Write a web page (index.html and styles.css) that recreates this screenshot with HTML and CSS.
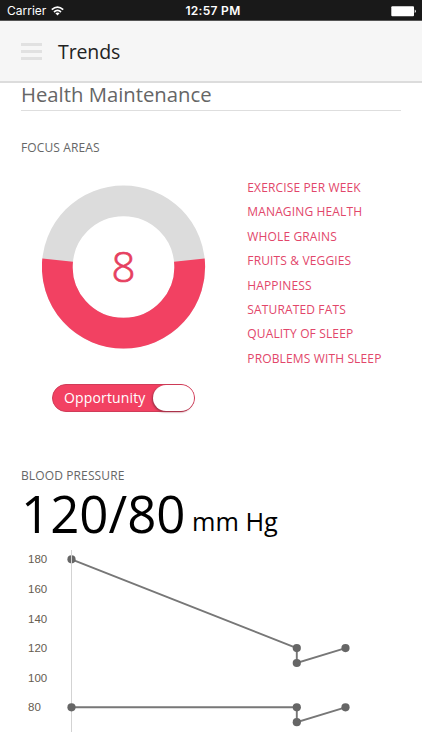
FILE: index.html
```html
<!DOCTYPE html>
<html lang="en">
<head>
<meta charset="utf-8">
<title>Trends</title>
<link rel="stylesheet" href="styles.css">
</head>
<body>
<div class="status">
  <div class="carrier">Carrier
    <svg class="wifi" width="13" height="10" viewBox="0 0 13 10" fill="none" stroke="#fff" stroke-width="1.7"><path d="M.8 3.7Q6.500-1.500 12.200 3.700M3 6Q6.500 2.900 10 6"/><path d="M4.400 7.300Q6.500 5.600 8.600 7.300L6.500 9.500Z" fill="#fff" stroke="none"/></svg>
  </div>
  <div class="clock">12:57 PM</div>
  <svg class="battery" width="26" height="11" viewBox="0 0 26 11"><rect x=".3" y=".3" width="22.700" height="10" rx="1" fill="#fff"/><path d="M23.700 3.600Q25 4 25 5.300T23.700 7Z" fill="#ddd"/></svg>
</div>
<header class="header">
  <div class="menu"><i></i><i></i><i></i></div>
  <h1>Trends</h1>
</header>
<main>
  <h2>Health Maintenance</h2>
  <h3 class="focus-title">FOCUS AREAS</h3>
  <section class="focus">
    <div class="score">
      <svg class="donut" width="164" height="164" viewBox="-81.500 -82 164 164">
        <circle r="66.200" fill="none" stroke="#dcdcdc" stroke-width="30.800"/>
        <path d="M-65.840-6.920A66.200 66.200 0 1 0 65.840-6.920" fill="none" stroke="#f24162" stroke-width="30.800"/>
        <text class="count" x="0" y="15" text-anchor="middle">8</text>
      </svg>
      <div class="toggle"><span>Opportunity</span><b></b></div>
    </div>
    <ul class="areas">
      <li>EXERCISE PER WEEK</li>
      <li>MANAGING HEALTH</li>
      <li>WHOLE GRAINS</li>
      <li>FRUITS &amp; VEGGIES</li>
      <li>HAPPINESS</li>
      <li>SATURATED FATS</li>
      <li>QUALITY OF SLEEP</li>
      <li>PROBLEMS WITH SLEEP</li>
    </ul>
  </section>
  <h3 class="bp-title">BLOOD PRESSURE</h3>
  <div class="reading"><span class="value">120/80</span><span class="unit">mm Hg</span></div>
  <svg class="chart" width="422" height="200" viewBox="0 550 422 200">
    <g class="ticks">
      <text x="28" y="563.400">180</text>
      <text x="28" y="593">160</text>
      <text x="28" y="622.600">140</text>
      <text x="28" y="652.200">120</text>
      <text x="28" y="681.800">100</text>
      <text x="28" y="711.400">80</text>
    </g>
    <g class="lines">
      <path d="M71.500 559.300L296.800 648.100V663L345.500 648.100"/>
      <path d="M71.500 707.300H296.800V722.200L345.500 707.300"/>
    </g>
    <g class="dots">
      <circle cx="71.500" cy="559.300" r="4.100"/>
      <circle cx="296.800" cy="648.100" r="4.100"/>
      <circle cx="296.800" cy="663" r="4.100"/>
      <circle cx="345.500" cy="648.100" r="4.100"/>
      <circle cx="296.800" cy="707.300" r="4.100"/>
      <circle cx="296.800" cy="722.200" r="4.100"/>
      <circle cx="345.500" cy="707.300" r="4.100"/>
    </g>
    <path class="axis" d="M71.500 550V732"/>
    <circle class="dot-front" cx="71.500" cy="707.300" r="4.100"/>
  </svg>
</main>
</body>
</html>
```
FILE: styles.css
```css
* { box-sizing: border-box; margin: 0; padding: 0; }
body { width: 422px; height: 750px; overflow: hidden; background: #fff; font-family: "Open Sans", sans-serif; }
h1, h2, h3 { font-weight: 400; }
.status { height: 21px; background: #191919; border-bottom: 1px solid #555; color: #fff; display: grid; grid-template-columns: 1fr auto 1fr; align-items: center; padding: 1px 5px 0 7px; font: 12px/20px Inter, sans-serif; }
.carrier { display: flex; align-items: center; gap: 4.500px; }
.clock { font-weight: 600; letter-spacing: .3px; padding-left: 2px; }
.battery { justify-self: end; }
.header { height: 62px; background: #f6f6f6; border-bottom: 2px solid #dcdcdc; display: flex; align-items: center; padding-left: 21px; gap: 16px; }
.menu { width: 21px; display: grid; gap: 4px; }
.menu i { height: 3px; background: #e1e1e1; }
h1 { font-size: 19.500px; line-height: 28px; letter-spacing: -.1px; padding-top: 1px; color: #222; }
h2 { height: 28px; margin: 0 21px; border-bottom: 1px solid #dedede; font-size: 20.300px; line-height: 23px; color: #666; }
h3 { font-size: 12px; line-height: 16px; letter-spacing: .12px; color: #666; padding-left: 21px; }
.focus-title { margin-top: 29px; }
.focus { display: flex; height: 270px; padding: 29px 0 0 42px; }
.score { width: 205.300px; }
.donut { display: block; }
.count { font-size: 42px; font-weight: 300; fill: #e63f60; stroke: #e63f60; stroke-width: .7px; }
.toggle { width: 143px; height: 28px; margin: 35px 0 0 10px; border: 1px solid #d03c58; border-radius: 14px; background: #f24162; display: flex; align-items: center; justify-content: space-between; padding-left: 11px; color: #fff; font-size: 14px; }
.toggle span { letter-spacing: .15px; margin-top: -2px; }
.toggle b { width: 41px; height: 26px; border-radius: 13px; background: #fff; box-shadow: -1px 1px 2px #9c3044; }
.areas { list-style: none; color: #e2466a; font-size: 12px; line-height: 24.400px; letter-spacing: .14px; margin-top: -9px; }
.bp-title { margin-top: 42px; }
.reading { height: 66px; display: flex; align-items: baseline; padding: 1px 0 0 21px; line-height: 56px; color: #000; }
.value { font-size: 51px; }
.unit { font-size: 25.300px; margin-left: 6.500px; position: relative; top: -2px; }
.chart { display: block; }
.ticks { font: 11.500px "Liberation Sans", sans-serif; fill: #665c50; }
.lines { fill: none; stroke: #777; stroke-width: 1.900; }
.dots, .dot-front { fill: #666; }
.axis { stroke: #d3d3d3; stroke-width: 1; }
```
